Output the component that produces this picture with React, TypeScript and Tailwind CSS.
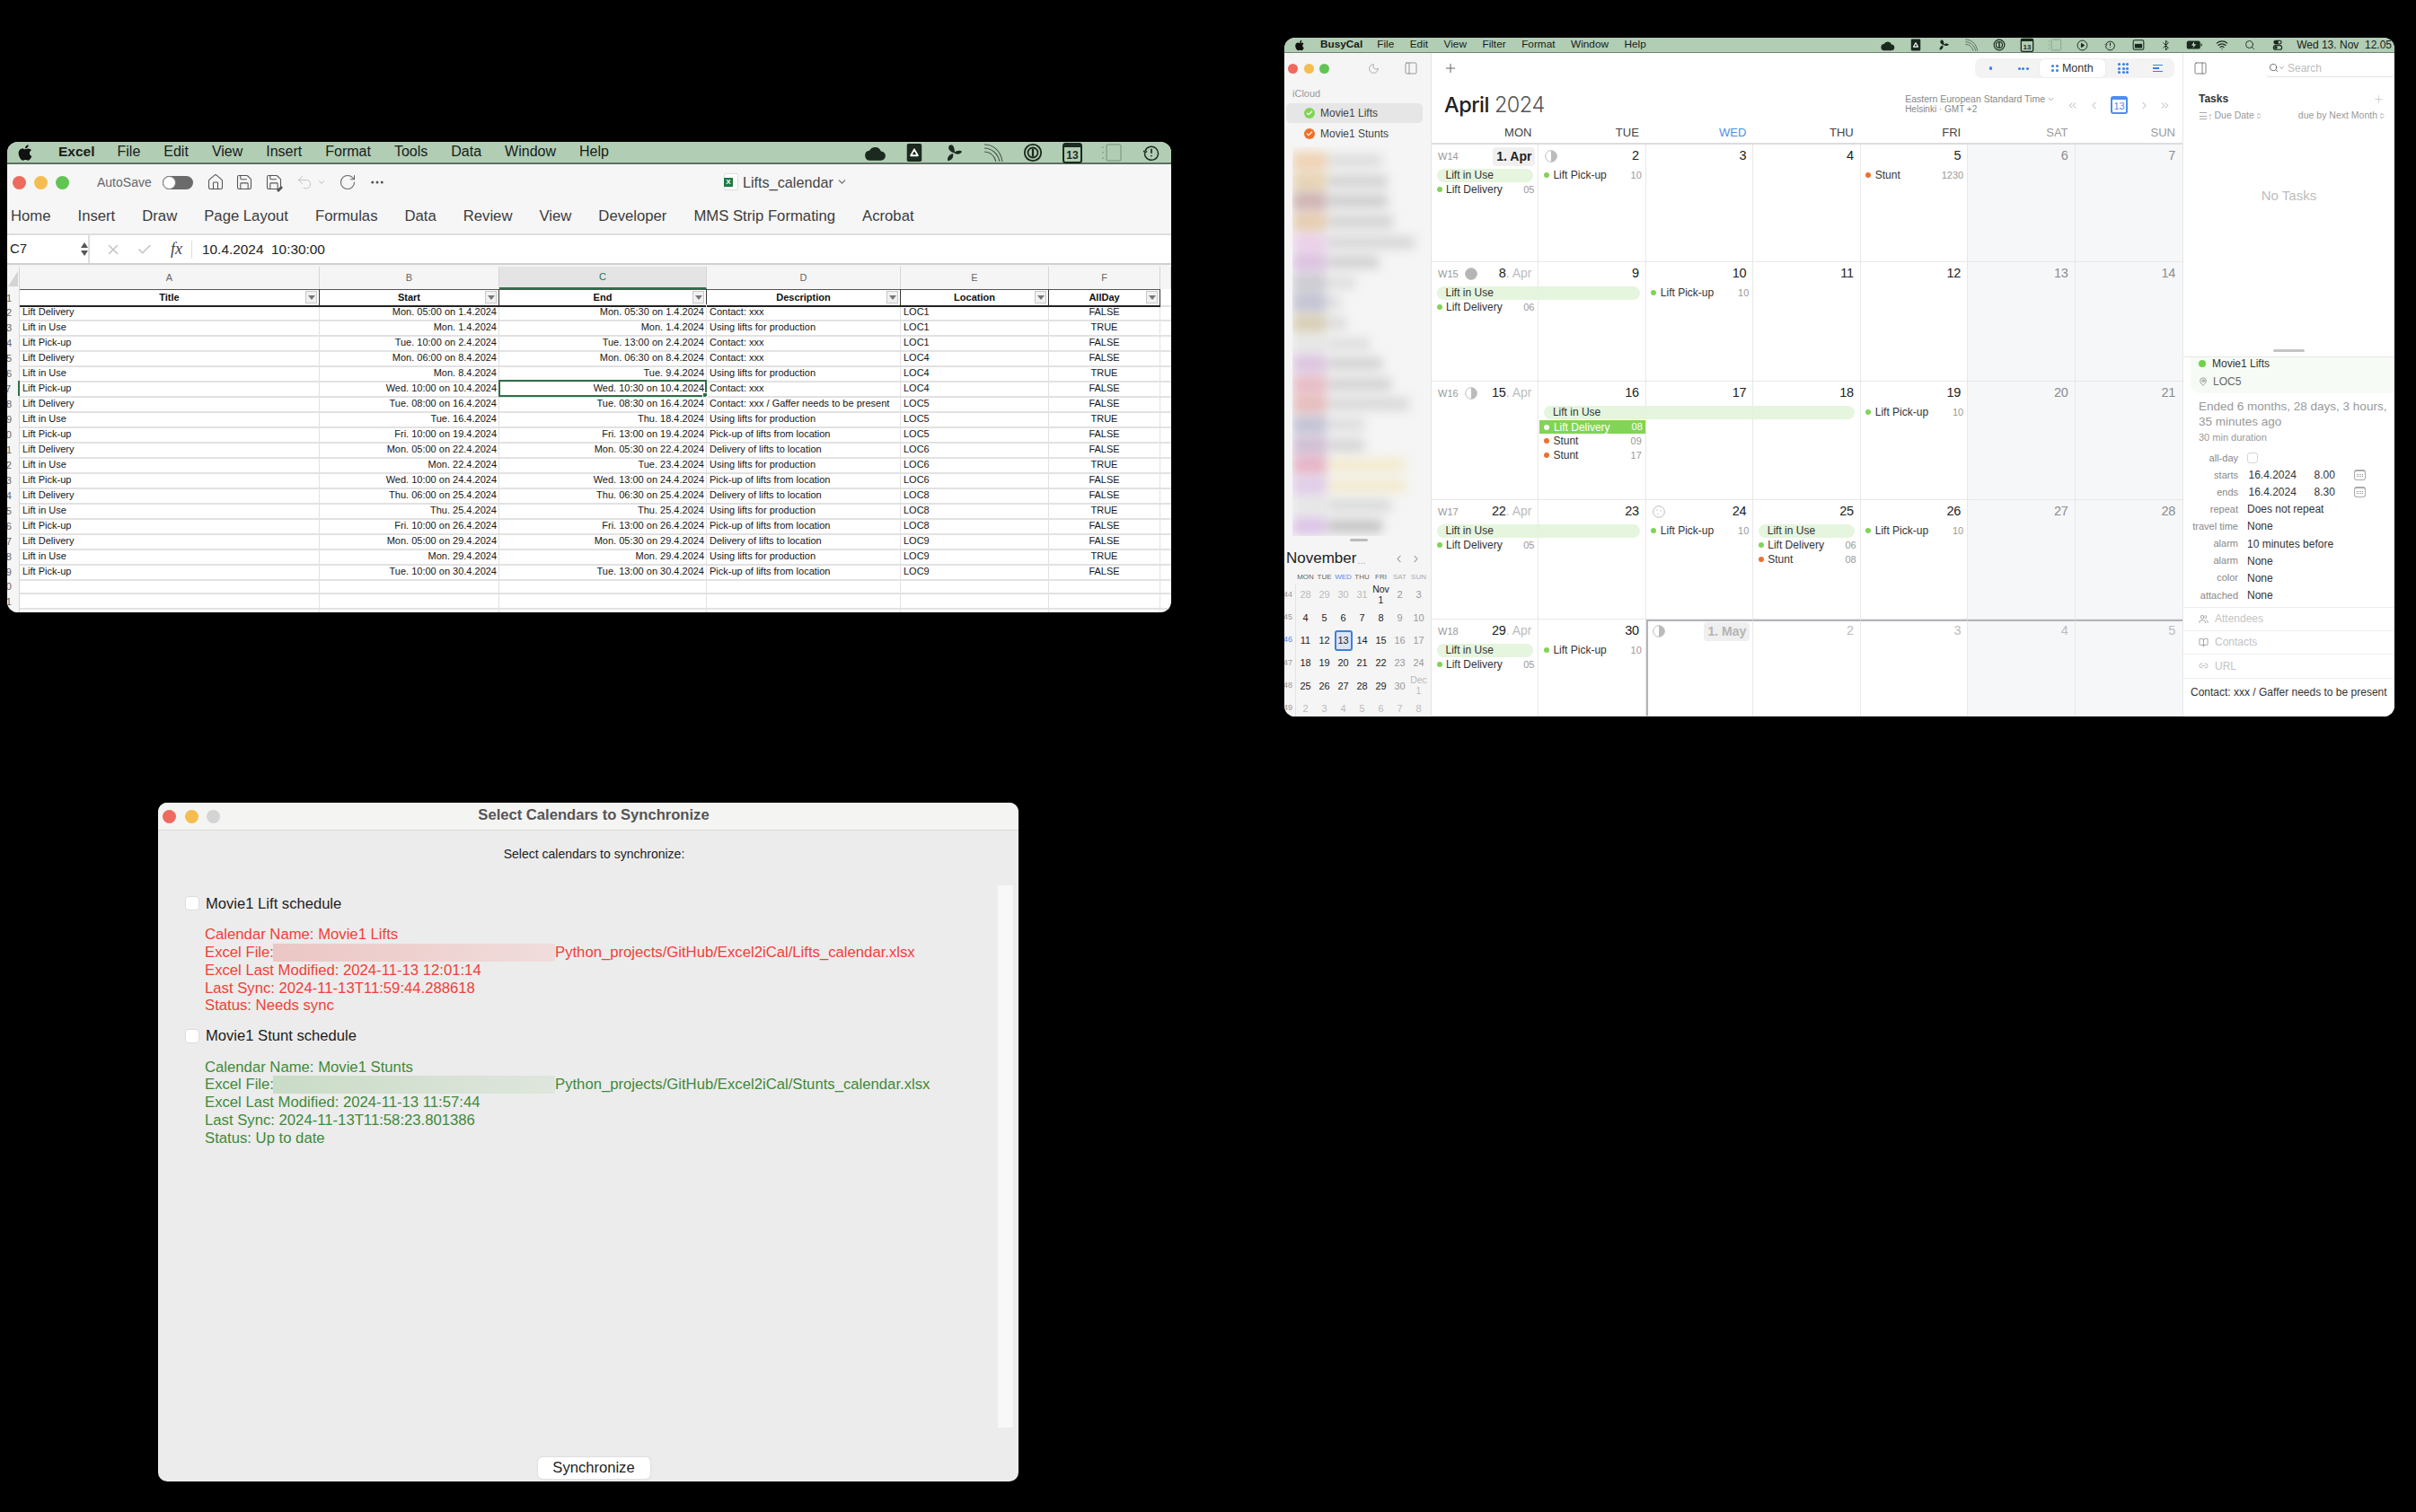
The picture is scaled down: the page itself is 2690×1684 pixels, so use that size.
import React from "react";
import { FaApple } from "react-icons/fa";
import {
  House, Save, Undo2, RotateCw, Ellipsis, ChevronDown, X, Check, Plus, Moon, PanelLeft, PanelRight,
  ChevronLeft, ChevronRight, ChevronsLeft, ChevronsRight, Search, Users, BookOpen, Link2, MapPin,
  Bluetooth, Wifi, ChevronsUpDown,
} from "lucide-react";

const ink = "#1b2a1f";

function Cloud({ s }: { s: number }) {
  return (
    <svg width={s} height={s} viewBox="0 0 24 24" fill={ink}>
      <path d="M6.5 20A5 5 0 0 1 2 15a5 5 0 0 1 4.5-5A6.5 6.5 0 0 1 18.4 10.6 4.8 4.8 0 0 1 23 15.3 4.7 4.7 0 0 1 18.3 20z" />
    </svg>
  );
}
function Drive({ s }: { s: number }) {
  return (
    <svg width={s} height={s} viewBox="0 0 24 24">
      <rect x="3" y="1" width="18" height="22" rx="2" fill={ink} />
      <path d="M12 8l4.2 7.5H7.8z" fill="none" stroke="#fff" strokeWidth="2" strokeLinejoin="round" />
    </svg>
  );
}
function Fan({ s }: { s: number }) {
  return (
    <svg width={s} height={s} viewBox="0 0 24 24" fill={ink}>
      <path d="M11 12C6 10 4 6 7 3c3-2 6 1 6 9z" />
      <path d="M12 12c4-3 8-3 10-1-2 3-7 4-10 1z" />
      <path d="M11 13c1 4-1 8-6 9-2-3 1-8 6-9z" />
    </svg>
  );
}
function Curves({ s }: { s: number }) {
  return (
    <svg width={s} height={s} viewBox="0 0 24 24" fill="none" stroke="#4c5d50" strokeWidth="1.2">
      <path d="M2 3c9 0 18 6 20 19" />
      <path d="M2 7c7 0 15 5 17 15" />
      <path d="M2 11c6 0 11 4 13 11" />
    </svg>
  );
}
function OnePass({ s }: { s: number }) {
  return (
    <svg width={s} height={s} viewBox="0 0 24 24" fill="none" stroke={ink} strokeWidth="2">
      <circle cx="12" cy="12" r="10" />
      <circle cx="12" cy="12" r="6" />
      <path d="M12 7v10" strokeWidth="2.5" />
    </svg>
  );
}
function Cal13({ s }: { s: number }) {
  return (
    <svg width={s} height={s} viewBox="0 0 24 24">
      <rect x="2" y="2" width="20" height="21" rx="2.5" fill="none" stroke={ink} strokeWidth="2" />
      <rect x="2" y="2" width="20" height="4" fill={ink} />
      <text x="12" y="19" fontSize="12" textAnchor="middle" fontWeight="700" fill={ink} fontFamily="Liberation Sans">13</text>
    </svg>
  );
}
function GridBox({ s }: { s: number }) {
  return (
    <svg width={s} height={s} viewBox="0 0 24 24" fill="none" stroke="#8aa48e" strokeWidth="1.5">
      <rect x="6" y="3" width="16" height="18" rx="2" />
      <path d="M2 5v2M2 11v2M2 17v2" />
    </svg>
  );
}
function ClockAlert({ s }: { s: number }) {
  return (
    <svg width={s} height={s} viewBox="0 0 24 24" fill="none" stroke={ink} strokeWidth="1.8">
      <path d="M3.5 10A9 9 0 1 1 3 13" />
      <path d="M1.5 9.5L3.5 12l2.5-2" />
      <path d="M12 7v6M12 15.5v1.5" strokeWidth="2" />
    </svg>
  );
}
function Play({ s }: { s: number }) {
  return (
    <svg width={s} height={s} viewBox="0 0 24 24" fill="none" stroke={ink} strokeWidth="1.8">
      <circle cx="12" cy="12" r="10" />
      <path d="M10 8l6 4-6 4z" fill={ink} />
    </svg>
  );
}
function WinBox({ s }: { s: number }) {
  return (
    <svg width={s} height={s} viewBox="0 0 24 24">
      <rect x="2" y="3" width="20" height="18" rx="2.5" fill="none" stroke={ink} strokeWidth="1.8" />
      <rect x="5" y="10" width="14" height="8" fill={ink} />
    </svg>
  );
}
function Battery({ s }: { s: number }) {
  return (
    <svg width={s} height={s} viewBox="0 0 24 24">
      <rect x="1" y="6" width="20" height="12" rx="2.5" fill={ink} />
      <rect x="22" y="10" width="1.5" height="4" fill={ink} />
      <path d="M12 7l-4 6h3l-1 4 5-6h-3z" fill="#b2cfb6" />
    </svg>
  );
}
function Control({ s }: { s: number }) {
  return (
    <svg width={s} height={s} viewBox="0 0 24 24" fill={ink}>
      <rect x="4" y="3" width="16" height="8" rx="4" />
      <rect x="4" y="13" width="16" height="8" rx="4" fill="none" stroke={ink} strokeWidth="2" />
      <circle cx="15.5" cy="7" r="2.5" fill="#b2cfb6" />
      <circle cx="8.5" cy="17" r="3" />
    </svg>
  );
}

const excelRows: string[][] = [
  ["Lift Delivery", "Mon. 05:00 on 1.4.2024", "Mon. 05:30 on 1.4.2024", "Contact: xxx", "LOC1", "FALSE"],
  ["Lift in Use", "Mon. 1.4.2024", "Mon. 1.4.2024", "Using lifts for production", "LOC1", "TRUE"],
  ["Lift Pick-up", "Tue. 10:00 on 2.4.2024", "Tue. 13:00 on 2.4.2024", "Contact: xxx", "LOC1", "FALSE"],
  ["Lift Delivery", "Mon. 06:00 on 8.4.2024", "Mon. 06:30 on 8.4.2024", "Contact: xxx", "LOC4", "FALSE"],
  ["Lift in Use", "Mon. 8.4.2024", "Tue. 9.4.2024", "Using lifts for production", "LOC4", "TRUE"],
  ["Lift Pick-up", "Wed. 10:00 on 10.4.2024", "Wed. 10:30 on 10.4.2024", "Contact: xxx", "LOC4", "FALSE"],
  ["Lift Delivery", "Tue. 08:00 on 16.4.2024", "Tue. 08:30 on 16.4.2024", "Contact: xxx / Gaffer needs to be present", "LOC5", "FALSE"],
  ["Lift in Use", "Tue. 16.4.2024", "Thu. 18.4.2024", "Using lifts for production", "LOC5", "TRUE"],
  ["Lift Pick-up", "Fri. 10:00 on 19.4.2024", "Fri. 13:00 on 19.4.2024", "Pick-up of lifts from location", "LOC5", "FALSE"],
  ["Lift Delivery", "Mon. 05:00 on 22.4.2024", "Mon. 05:30 on 22.4.2024", "Delivery of lifts to location", "LOC6", "FALSE"],
  ["Lift in Use", "Mon. 22.4.2024", "Tue. 23.4.2024", "Using lifts for production", "LOC6", "TRUE"],
  ["Lift Pick-up", "Wed. 10:00 on 24.4.2024", "Wed. 13:00 on 24.4.2024", "Pick-up of lifts from location", "LOC6", "FALSE"],
  ["Lift Delivery", "Thu. 06:00 on 25.4.2024", "Thu. 06:30 on 25.4.2024", "Delivery of lifts to location", "LOC8", "FALSE"],
  ["Lift in Use", "Thu. 25.4.2024", "Thu. 25.4.2024", "Using lifts for production", "LOC8", "TRUE"],
  ["Lift Pick-up", "Fri. 10:00 on 26.4.2024", "Fri. 13:00 on 26.4.2024", "Pick-up of lifts from location", "LOC8", "FALSE"],
  ["Lift Delivery", "Mon. 05:00 on 29.4.2024", "Mon. 05:30 on 29.4.2024", "Delivery of lifts to location", "LOC9", "FALSE"],
  ["Lift in Use", "Mon. 29.4.2024", "Mon. 29.4.2024", "Using lifts for production", "LOC9", "TRUE"],
  ["Lift Pick-up", "Tue. 10:00 on 30.4.2024", "Tue. 13:00 on 30.4.2024", "Pick-up of lifts from location", "LOC9", "FALSE"],
  ["", "", "", "", "", ""],
  ["", "", "", "", "", ""],
  ["", "", "", "", "", ""],
];

const cols = "grid grid-cols-[14px_334px_200px_231px_216px_165px_124px_12px]";
const cellLine = "border-r border-[#d6d6d6]";
const rowLine = "border-b-2 border-[#e2e2e2]";

function FilterBtn() {
  return (
    <span className="absolute right-[2px] top-[1px] w-[13px] h-[14px] bg-[#f1f1f1] border border-[#c8c8c8] flex items-center justify-center">
      <span className="w-0 h-0 border-l-[4px] border-r-[4px] border-t-[5px] border-l-transparent border-r-transparent border-t-[#777]" />
    </span>
  );
}

function ExcelWindow() {
  const menus = ["File", "Edit", "View", "Insert", "Format", "Tools", "Data", "Window", "Help"];
  const tabs = ["Home", "Insert", "Draw", "Page Layout", "Formulas", "Data", "Review", "View", "Developer", "MMS Strip Formating", "Acrobat"];
  const heads = ["Title", "Start", "End", "Description", "Location", "AllDay"];
  return (
    <div className="absolute left-[8px] top-[158px] w-[1296px] h-[524px] rounded-[12px] overflow-hidden bg-white flex flex-col">
      <div className="h-[25px] bg-[#b1cdb4] border-b-2 border-[#5f7263] flex items-center text-[16px] text-[#17201a] shrink-0">
        <FaApple className="ml-[11px] w-[18px] h-[20px] text-[#111]" />
        <span className="ml-[28px] font-bold text-[15.5px] pb-[1px]">Excel</span>
        <div className="ml-[25px] flex gap-[26px] pb-[1px]">
          {menus.map((m) => <span key={m}>{m}</span>)}
        </div>
        <div className="ml-auto flex items-center">
          {[<Cloud s={26} />, <Drive s={22} />, <Fan s={22} />, <Curves s={24} />, <OnePass s={22} />, <Cal13 s={24} />, <GridBox s={24} />, <ClockAlert s={20} />].map((ic, i) => (
            <span key={i} className="w-[44px] flex justify-center">{ic}</span>
          ))}
        </div>
      </div>
      <div className="h-[40px] bg-[#f6f6f6] flex items-center text-[#555] shrink-0 relative">
        <span className="ml-[6px] w-[15px] h-[15px] rounded-full bg-[#ee6a5f]" />
        <span className="ml-[9px] w-[15px] h-[15px] rounded-full bg-[#f5bd4f]" />
        <span className="ml-[9px] w-[15px] h-[15px] rounded-full bg-[#61c454]" />
        <span className="ml-[31px] text-[14px] text-[#666]">AutoSave</span>
        <span className="ml-[12px] w-[34px] h-[15px] rounded-full bg-[#6b6b6b] flex items-center">
          <span className="w-[15px] h-[15px] rounded-full bg-white border border-[#777]" />
        </span>
        <House size={20} strokeWidth={1.3} className="ml-[15px]" />
        <Save size={20} strokeWidth={1.3} className="ml-[12px]" />
        <span className="ml-[13px] relative">
          <Save size={20} strokeWidth={1.3} />
          <span className="absolute right-[0px] bottom-[1px] w-[7px] h-[3px] bg-[#555] rotate-[-45deg]" />
        </span>
        <Undo2 size={20} strokeWidth={1.2} className="ml-[14px] text-[#c4c4c4]" />
        <ChevronDown size={10} className="ml-[4px] text-[#aaa]" />
        <RotateCw size={20} strokeWidth={1.3} className="ml-[14px] text-[#666]" />
        <Ellipsis size={18} className="ml-[14px] text-[#555]" />
        <div className="absolute left-[798px] flex items-center">
          <span className="w-[16px] h-[19px] bg-white border border-[#ddd] rounded-[2px] flex items-center">
            <span className="w-[10px] h-[10px] bg-[#1f7a45] ml-[-1px] flex items-center justify-center text-[8px] leading-none font-bold text-white">X</span>
          </span>
          <span className="ml-[5px] text-[16.2px] text-[#444]">Lifts_calendar</span>
          <ChevronDown size={13} className="ml-[3px] text-[#666]" />
        </div>
      </div>
      <div className="h-[39px] bg-[#f6f6f6] border-b-2 border-[#dedede] flex items-center pl-[4px] pb-[2px] gap-[30px] text-[16.7px] text-[#3c3c3c] shrink-0">
        {tabs.map((t) => <span key={t}>{t}</span>)}
      </div>
      <div className="h-[33px] bg-white border-b-2 border-[#cfcfcf] flex items-center shrink-0">
        <div className="w-[92px] h-full flex items-center justify-between border-r-2 border-[#dedede] text-[15px] text-[#222] pl-[3px] pr-[0px]">
          <span>C7</span>
          <span className="flex flex-col gap-[3px]">
            <span className="w-0 h-0 border-l-[4px] border-r-[4px] border-b-[6px] border-l-transparent border-r-transparent border-b-[#555]" />
            <span className="w-0 h-0 border-l-[4px] border-r-[4px] border-t-[6px] border-l-transparent border-r-transparent border-t-[#555]" />
          </span>
        </div>
        <X size={18} strokeWidth={2} className="ml-[17px] text-[#c2c2c2]" />
        <Check size={18} strokeWidth={2} className="ml-[17px] text-[#c2c2c2]" />
        <span className="ml-[20px] text-[18px] italic text-[#444] font-['Liberation_Serif',serif]">fx</span>
        <span className="ml-[10px] w-px h-[20px] bg-[#ddd]" />
        <span className="ml-[11px] text-[15.4px] text-[#222] whitespace-pre">10.4.2024  10:30:00</span>
      </div>
      <div className="h-[2px] bg-[#f3f3f3] shrink-0" />
      <div className={`${cols} h-[25px] bg-[#f5f5f5] text-[11px] text-[#666] shrink-0`}>
        <div className="flex items-end justify-start pl-[1px] pb-[3px] border-r border-[#d6d6d6]">
          <span className="w-0 h-0 border-b-[17px] border-l-[11px] border-b-[#d4d4d4] border-l-transparent" />
        </div>
        {["A", "B", "C", "D", "E", "F", ""].map((c, i) => (
          <div key={i} className={`flex items-center justify-center ${cellLine} ${c === "C" ? "bg-[#e4e4e4] text-[#2f6f49] border-b-2 border-b-[#2f6f49]" : ""}`}>{c}</div>
        ))}
      </div>
      <div className={`${cols} h-[17px] text-[11px] text-[#111] shrink-0`}>
        <div className="bg-[#f5f5f5] border-r border-[#d6d6d6] overflow-hidden flex items-center justify-end pr-[8px] text-[#666]">1</div>
        {heads.map((h) => (
          <div key={h} className="relative flex items-center justify-center font-bold border-b-2 border-b-[#222] border-r border-r-[#333] border-t border-t-[#555]">
            {h}
            <FilterBtn />
          </div>
        ))}
        <div className={rowLine} />
      </div>
      {excelRows.map((r, i) => {
        const n = i + 2;
        return (
          <div key={n} className={`${cols} h-[17px] text-[11px] text-[#161616] shrink-0`}>
            <div className={`bg-[#f5f5f5] overflow-hidden flex items-center justify-end pr-[8px] text-[#666] ${n === 7 ? "border-r-2 border-[#2f6f49]" : "border-r border-[#d6d6d6]"}`}>{n}</div>
            <div className={`flex items-center pl-[3px] ${rowLine} ${cellLine}`}>{r[0]}</div>
            <div className={`flex items-center justify-end pr-[2px] ${rowLine} ${cellLine}`}>{r[1]}</div>
            <div className={`relative flex items-center justify-end pr-[2px] ${rowLine} ${cellLine}`}>
              {r[2]}
              {n === 7 && (
                <span className="absolute -left-[1px] -top-[1px] -right-[1px] -bottom-[1px] border-2 border-[#2f6f49]">
                  <span className="absolute -right-[3px] -bottom-[3px] w-[6px] h-[6px] bg-[#2f6f49] border border-white" />
                </span>
              )}
            </div>
            <div className={`flex items-center pl-[3px] ${rowLine} ${cellLine} whitespace-nowrap`}>{r[3]}</div>
            <div className={`flex items-center pl-[3px] ${rowLine} ${cellLine}`}>{r[4]}</div>
            <div className={`flex items-center justify-center ${rowLine} ${cellLine}`}>{r[5]}</div>
            <div className={rowLine} />
          </div>
        );
      })}
    </div>
  );
}

function SyncEntry({ title, color, blur, name, modified, sync, status, file }: { title: string; color: string; blur: string; name: string; modified: string; sync: string; status: string; file: string }) {
  return (
    <div>
      <div className="flex items-center h-[20px] pl-[30px]">
        <span className="w-[16px] h-[16px] rounded-[4px] bg-white border border-[#dcdcdc]" />
        <span className="ml-[7px] text-[16.6px] text-[#1c1c1c] pt-[2px]">{title}</span>
      </div>
      <div className={`mt-[15px] pl-[52px] text-[16.7px] leading-[19.75px] whitespace-nowrap ${color}`}>
        <div>{name}</div>
        <div className="flex items-center">
          <span className="w-[76px]">Excel File:</span>
          <span className={`w-[314px] h-[20px] ${blur}`} />
          <span>{file}</span>
        </div>
        <div>{modified}</div>
        <div>{sync}</div>
        <div>{status}</div>
      </div>
    </div>
  );
}

function SyncWindow() {
  return (
    <div className="absolute left-[176px] top-[894px] w-[958px] h-[756px] rounded-[10px] overflow-hidden bg-[#ececec] flex flex-col">
      <div className="h-[31px] shrink-0 bg-[#f4f4f3] border-b border-[#dadada] flex items-center relative">
        <span className="ml-[5px] w-[15px] h-[15px] rounded-full bg-[#ee6a5f]" />
        <span className="ml-[9.5px] w-[15px] h-[15px] rounded-full bg-[#f5bd4f]" />
        <span className="ml-[9.5px] w-[15px] h-[15px] rounded-full bg-[#d4d4d4]" />
        <span className="absolute inset-x-0 pl-[12px] text-center text-[16.6px] font-bold text-[#555] -mt-[1px]">Select Calendars to Synchronize</span>
      </div>
      <div className="flex-1 flex min-h-0">
        <div className="flex-1 min-w-0">
          <div className="mt-[16px] h-[20px] pl-[36px] text-center text-[14px] leading-[20px] text-[#222]">Select calendars to synchronize:</div>
          <div className="mt-[35px]">
            <SyncEntry
              title="Movie1 Lift schedule"
              color="text-[#f23f38]"
              blur="bg-linear-to-r from-[#ebc6c4] to-[#f0dddc]"
              name="Calendar Name: Movie1 Lifts"
              file="Python_projects/GitHub/Excel2iCal/Lifts_calendar.xlsx"
              modified="Excel Last Modified: 2024-11-13 12:01:14"
              sync="Last Sync: 2024-11-13T11:59:44.288618"
              status="Status: Needs sync"
            />
          </div>
          <div className="mt-[13.5px]">
            <SyncEntry
              title="Movie1 Stunt schedule"
              color="text-[#3f8a3a]"
              blur="bg-linear-to-r from-[#c9dcc6] to-[#dfe6dd]"
              name="Calendar Name: Movie1 Stunts"
              file="Python_projects/GitHub/Excel2iCal/Stunts_calendar.xlsx"
              modified="Excel Last Modified: 2024-11-13 11:57:44"
              sync="Last Sync: 2024-11-13T11:58:23.801386"
              status="Status: Up to date"
            />
          </div>
        </div>
        <div className="w-[17px] mt-[61px] mb-[32px] mr-[6px] bg-[#f8f8f8]" />
      </div>
      <div className="h-[28px] shrink-0 pl-[12px] flex justify-center">
        <button className="w-[125px] h-[24px] mt-[0.5px] rounded-[5px] bg-white text-[16.6px] text-[#222] shadow-[0_0_2px_rgba(0,0,0,0.2)]">Synchronize</button>
      </div>
    </div>
  );
}

const blurRows: [string, string, string][] = [
  ["bg-[#efd2b4]", "w-[60px]", "bg-[#dcdcdc]"],
  ["bg-[#e6d3b4]", "w-[66px]", "bg-[#d2d2d2]"],
  ["bg-[#cfb4b4]", "w-[66px]", "bg-[#cccccc]"],
  ["bg-[#e6ccb0]", "w-[72px]", "bg-[#d2d2d2]"],
  ["bg-[#ead0e8]", "w-[96px]", "bg-[#d6d6d6]"],
  ["bg-[#dcc2e0]", "w-[56px]", "bg-[#d0d0d0]"],
  ["bg-[#cbcbd1]", "w-[30px]", "bg-[#dedede]"],
  ["bg-[#c2c2d4]", "w-[14px]", "bg-[#dcdcdc]"],
  ["bg-[#d8ceb6]", "w-[20px]", "bg-[#dadada]"],
  ["bg-[#e6e6e6]", "w-[46px]", "bg-[#dedede]"],
  ["bg-[#dcc4e0]", "w-[60px]", "bg-[#d2d2d2]"],
  ["bg-[#e6bcc6]", "w-[70px]", "bg-[#d2d2d2]"],
  ["bg-[#e6bcbc]", "w-[90px]", "bg-[#d8d8d8]"],
  ["bg-[#c2c2d4]", "w-[40px]", "bg-[#dcdcdc]"],
  ["bg-[#d0bed4]", "w-[40px]", "bg-[#d4d4d4]"],
  ["bg-[#e6b4c6]", "w-[86px]", "bg-[#f2eacc]"],
  ["bg-[#dfcce8]", "w-[86px]", "bg-[#f2eacc]"],
  ["bg-[#e6e6e6]", "w-[70px]", "bg-[#dadada]"],
  ["bg-[#dcc4e8]", "w-[60px]", "bg-[#c2c2c2]"],
];

const miniRows: [string, string[], string[]][] = [
  ["44", ["28", "29", "30", "31", "Nov 1", "2", "3"], ["d", "d", "d", "d", "n", "w", "w"]],
  ["45", ["4", "5", "6", "7", "8", "9", "10"], ["n", "n", "n", "n", "n", "w", "w"]],
  ["46", ["11", "12", "13", "14", "15", "16", "17"], ["n", "n", "s", "n", "n", "w", "w"]],
  ["47", ["18", "19", "20", "21", "22", "23", "24"], ["n", "n", "n", "n", "n", "w", "w"]],
  ["48", ["25", "26", "27", "28", "29", "30", "Dec 1"], ["n", "n", "n", "n", "n", "w", "d"]],
  ["49", ["2", "3", "4", "5", "6", "7", "8"], ["d", "d", "d", "d", "d", "d", "d"]],
];

function CheckDot({ color }: { color: string }) {
  return (
    <span className={`w-[12px] h-[12px] rounded-full flex items-center justify-center ${color}`}>
      <Check size={8} strokeWidth={3.5} className="text-white" />
    </span>
  );
}

function Sidebar() {
  return (
    <div className="w-[164px] shrink-0 bg-[#f5f5f5] flex flex-col border-r border-[#e4e4e4]">
      <div className="h-[34px] flex items-center pl-[4px] shrink-0">
        <span className="ml-[0px] w-[11px] h-[11px] rounded-full bg-[#ee6a5f]" />
        <span className="ml-[6.5px] w-[11px] h-[11px] rounded-full bg-[#f5bd4f]" />
        <span className="ml-[6.5px] w-[11px] h-[11px] rounded-full bg-[#61c454]" />
        <Moon size={13} strokeWidth={1.2} className="ml-[43px] text-[#888]" />
        <PanelLeft size={16} strokeWidth={1.1} className="ml-[27px] text-[#777]" />
      </div>
      <div className="h-[22px] pl-[9px] text-[11px] text-[#9a9a9a] flex items-center shrink-0">iCloud</div>
      <div className="ml-[2px] w-[152px] h-[22px] rounded-[5px] bg-[#e6e6e6] flex items-center pl-[20px] text-[12px] text-[#444] shrink-0">
        <CheckDot color="bg-[#82d457]" />
        <span className="ml-[6px]">Movie1 Lifts</span>
      </div>
      <div className="ml-[2px] mt-[1px] w-[152px] h-[22px] flex items-center pl-[20px] text-[12px] text-[#444] shrink-0">
        <CheckDot color="bg-[#f0702a]" />
        <span className="ml-[6px]">Movie1 Stunts</span>
      </div>
      <div className="mt-[3px] ml-[9px] h-[434px] w-[150px] overflow-hidden shrink-0">
        <div className="blur-[6px] pt-[5px] flex flex-col">
          {blurRows.map((r, i) => (
            <div key={i} className="h-[22.6px] flex items-center">
              <span className={`w-[38px] h-[20px] ${r[0]}`} />
              <span className={`ml-[2px] h-[14px] ${r[1]} ${r[2]}`} />
            </div>
          ))}
        </div>
      </div>
      <div className="mt-[3px] h-[3px] w-[20px] ml-[73px] rounded-full bg-[#bbbbbb] shrink-0" />
      <div className="mt-[9px] h-[20px] pl-[2px] pr-[10px] flex items-center shrink-0">
        <span className="text-[17px] text-[#222]">November</span>
        <span className="text-[11px] text-[#aaa] ml-[1px] mt-[4px]">...</span>
        <ChevronLeft size={13} className="ml-auto text-[#aaa]" />
        <ChevronRight size={13} className="ml-[6px] text-[#aaa]" />
      </div>
      <div className="mt-[3px] h-[15px] grid grid-cols-[13px_repeat(7,21px)] text-[8px] text-[#666] items-center shrink-0">
        <span />
        {["MON", "TUE", "WED", "THU", "FRI", "SAT", "SUN"].map((d) => (
          <span key={d} className={`text-center ${d === "WED" ? "text-[#4d8df0]" : d === "SAT" || d === "SUN" ? "text-[#aaa]" : ""}`}>{d}</span>
        ))}
      </div>
      <div className="flex flex-col overflow-hidden flex-1 min-h-0">
        {miniRows.map((r) => (
          <div key={r[0]} className="grid grid-cols-[13px_repeat(7,21px)] h-[25.3px] shrink-0 text-[11px] items-center">
            <span className={`h-full flex items-center justify-end pr-[3px] text-[9px] border-r border-[#e4e4e4] ${r[0] === "46" ? "text-[#4d8df0]" : "text-[#999]"}`}>{r[0]}</span>
            {r[1].map((d, i) => {
              const k = r[2][i];
              const color = k === "d" ? "text-[#bbbbbb]" : k === "w" ? "text-[#999]" : "text-[#222]";
              if (k === "s") {
                return (
                  <span key={i} className="flex justify-center">
                    <span className="w-[20px] h-[23px] rounded-[3px] border-2 border-[#3f7fdc] bg-[#d9e5f9] flex items-center justify-center text-[#222]">{d}</span>
                  </span>
                );
              }
              if (d.includes(" ")) {
                const [a, b] = d.split(" ");
                return (
                  <span key={i} className={`text-center leading-[11px] text-[10.5px] ${color}`}>
                    <span className="block">{a}</span>
                    <span className="block mt-[1px]">{b}</span>
                  </span>
                );
              }
              return <span key={i} className={`text-center ${color}`}>{d}</span>;
            })}
          </div>
        ))}
      </div>
    </div>
  );
}

function MoonIcon({ kind }: { kind: "full" | "half" | "halfL" | "new" }) {
  return (
    <svg width="14" height="14" viewBox="0 0 14 14">
      <circle cx="7" cy="7" r="6.3" fill={kind === "full" ? "#b5b5b5" : "#fff"} stroke={kind === "full" ? "#b5b5b5" : "#bbb"} strokeWidth="1" />
      {kind === "half" && <path d="M7 .7a6.3 6.3 0 0 1 0 12.6z" fill="#bbb" />}
      {kind === "halfL" && <path d="M7 .7a6.3 6.3 0 0 0 0 12.6z" fill="#bbb" />}
      {kind === "new" && <g fill="#ddd"><circle cx="5" cy="5" r="1" /><circle cx="9" cy="6" r="1" /><circle cx="6" cy="9.5" r="1" /></g>}
    </svg>
  );
}

type Ev = { cls: string; kind: "pill" | "dot" | "sel"; title: string; time?: string; color?: string };
type Day = { n: string; suffix?: string; tone?: "dim" };
type WeekData = { label: string; moon?: "full" | "half" | "halfL" | "new"; moons?: [number, "full" | "half" | "halfL" | "new"]; days: Day[]; events: Ev[]; cls: string };

const colStart = ["col-start-1", "col-start-2", "col-start-3", "col-start-4", "col-start-5", "col-start-6", "col-start-7"];

const G = "bg-[#82d457]";
const O = "bg-[#f0702a]";

const weeks: WeekData[] = [
  {
    label: "W14", cls: "h-[131px]", moons: [1, "half"],
    days: [{ n: "1. Apr" }, { n: "2" }, { n: "3" }, { n: "4" }, { n: "5" }, { n: "6" }, { n: "7" }],
    events: [
      { cls: "col-start-1 col-span-1 row-start-2", kind: "pill", title: "Lift in Use" },
      { cls: "col-start-1 col-span-1 row-start-3", kind: "dot", title: "Lift Delivery", time: "05", color: G },
      { cls: "col-start-2 col-span-1 row-start-2", kind: "dot", title: "Lift Pick-up", time: "10", color: G },
      { cls: "col-start-5 col-span-1 row-start-2", kind: "dot", title: "Stunt", time: "1230", color: O },
    ],
  },
  {
    label: "W15", cls: "h-[133px]", moon: "full",
    days: [{ n: "8", suffix: ". Apr" }, { n: "9" }, { n: "10" }, { n: "11" }, { n: "12" }, { n: "13" }, { n: "14" }],
    events: [
      { cls: "col-start-1 col-span-2 row-start-2", kind: "pill", title: "Lift in Use" },
      { cls: "col-start-1 col-span-1 row-start-3", kind: "dot", title: "Lift Delivery", time: "06", color: G },
      { cls: "col-start-3 col-span-1 row-start-2", kind: "dot", title: "Lift Pick-up", time: "10", color: G },
    ],
  },
  {
    label: "W16", cls: "h-[132px]", moon: "half",
    days: [{ n: "15", suffix: ". Apr" }, { n: "16" }, { n: "17" }, { n: "18" }, { n: "19" }, { n: "20" }, { n: "21" }],
    events: [
      { cls: "col-start-2 col-span-3 row-start-2", kind: "pill", title: "Lift in Use" },
      { cls: "col-start-2 col-span-1 row-start-3", kind: "sel", title: "Lift Delivery", time: "08" },
      { cls: "col-start-2 col-span-1 row-start-4", kind: "dot", title: "Stunt", time: "09", color: O },
      { cls: "col-start-2 col-span-1 row-start-5", kind: "dot", title: "Stunt", time: "17", color: O },
      { cls: "col-start-5 col-span-1 row-start-2", kind: "dot", title: "Lift Pick-up", time: "10", color: G },
    ],
  },
  {
    label: "W17", cls: "h-[133px]", moons: [2, "new"],
    days: [{ n: "22", suffix: ". Apr" }, { n: "23" }, { n: "24" }, { n: "25" }, { n: "26" }, { n: "27" }, { n: "28" }],
    events: [
      { cls: "col-start-1 col-span-2 row-start-2", kind: "pill", title: "Lift in Use" },
      { cls: "col-start-1 col-span-1 row-start-3", kind: "dot", title: "Lift Delivery", time: "05", color: G },
      { cls: "col-start-3 col-span-1 row-start-2", kind: "dot", title: "Lift Pick-up", time: "10", color: G },
      { cls: "col-start-4 col-span-1 row-start-2", kind: "pill", title: "Lift in Use" },
      { cls: "col-start-4 col-span-1 row-start-3", kind: "dot", title: "Lift Delivery", time: "06", color: G },
      { cls: "col-start-4 col-span-1 row-start-4", kind: "dot", title: "Stunt", time: "08", color: O },
      { cls: "col-start-5 col-span-1 row-start-2", kind: "dot", title: "Lift Pick-up", time: "10", color: G },
    ],
  },
  {
    label: "W18", cls: "h-[108px]", moons: [2, "half"],
    days: [{ n: "29", suffix: ". Apr" }, { n: "30" }, { n: "1. May", tone: "dim" }, { n: "2", tone: "dim" }, { n: "3", tone: "dim" }, { n: "4", tone: "dim" }, { n: "5", tone: "dim" }],
    events: [
      { cls: "col-start-1 col-span-1 row-start-2", kind: "pill", title: "Lift in Use" },
      { cls: "col-start-1 col-span-1 row-start-3", kind: "dot", title: "Lift Delivery", time: "05", color: G },
      { cls: "col-start-2 col-span-1 row-start-2", kind: "dot", title: "Lift Pick-up", time: "10", color: G },
    ],
  },
];

function EventView({ e }: { e: Ev }) {
  if (e.kind === "pill") {
    return (
      <div className={`${e.cls} z-10 ml-[5.5px] mr-[6.5px] h-[14.5px] rounded-full bg-[#e2f4da]/90 pl-[10px] text-[12px] leading-[14px] text-[#333]`}>{e.title}</div>
    );
  }
  if (e.kind === "sel") {
    return (
      <div className={`${e.cls} z-10 mx-[1px] h-[15px] bg-[#82d457] flex items-center pl-[5px] pr-[3px] text-[12px] text-white`}>
        <span className="w-[6px] h-[6px] rounded-full bg-white" />
        <span className="ml-[4.5px]">{e.title}</span>
        <span className="ml-auto text-[11px]">{e.time}</span>
      </div>
    );
  }
  return (
    <div className={`${e.cls} z-10 h-[14.5px] flex items-center pl-[5.5px] pr-[5px] text-[12px] text-[#333]`}>
      <span className={`w-[6px] h-[6px] rounded-full ${e.color}`} />
      <span className="ml-[4.5px]">{e.title}</span>
      <span className="ml-auto text-[11px] text-[#999]">{e.time}</span>
    </div>
  );
}

function WeekRow({ w, last }: { w: WeekData; last?: boolean }) {
  return (
    <div className={`grid grid-cols-7 grid-rows-[27px_16px_16px_16px_16px_1fr] ${w.cls}`}>
      {w.days.map((d, i) => {
        const weekend = i >= 5;
        const isMayStart = last && i === 2;
        const borders = last && i >= 2 ? "border-t-2 border-t-[#b4b4ba]" : "";
        return (
          <div
            key={i}
            className={`${colStart[i]} row-start-1 row-span-6 border-b ${i < 6 ? "border-r" : ""} border-[#e8e8e8] ${weekend ? "bg-[#f6f7f9]" : "bg-white"} ${borders} ${isMayStart ? "border-l-2 border-l-[#b4b4ba]" : ""}`}
          />
        );
      })}
      {w.days.map((d, i) => {
        const showWeek = i === 0;
        const weekend = i >= 5;
        const pillDay = d.n === "1. Apr" || d.n === "1. May";
        const numColor = d.tone === "dim" ? "text-[#bdbdbd]" : weekend ? "text-[#8c8c8c]" : "text-[#222]";
        const m = w.moons && w.moons[0] === i ? w.moons[1] : null;
        return (
          <div key={`h${i}`} className={`${colStart[i]} row-start-1 z-10 flex items-center pr-[8px] pb-[1px] pl-[7px]`}>
            {showWeek && <span className="text-[11px] text-[#999]">{w.label}</span>}
            {showWeek && w.moon && <span className="ml-[7px] flex"><MoonIcon kind={w.moon} /></span>}
            {m && <span className="flex"><MoonIcon kind={m} /></span>}
            <span className="ml-auto flex items-baseline">
              {pillDay ? (
                <span className={`-mr-[4px] px-[4px] h-[21px] leading-[21px] rounded-[4px] text-[14px] font-bold ${d.tone === "dim" ? "bg-[#efefef] text-[#b4b4b4]" : "bg-[#f0f0f0] text-[#222]"}`}>{d.n}</span>
              ) : (
                <>
                  <span className={`text-[14.5px] tracking-[-0.3px] ${numColor}`}>{d.n}</span>
                  {d.suffix && <span className="text-[14px] text-[#bdbdbd]">{d.suffix}</span>}
                </>
              )}
            </span>
          </div>
        );
      })}
      {w.events.map((e, i) => <EventView key={i} e={e} />)}
    </div>
  );
}

function MainCal() {
  return (
    <div className="w-[836px] shrink-0 flex flex-col bg-white">
      <div className="h-[34px] flex items-center justify-between shrink-0 pr-[9px] pl-[13px]">
        <Plus size={16} strokeWidth={1.5} className="text-[#666]" />
        <div className="w-[222px] h-[22px] rounded-[7px] bg-[#f3f3f4] flex items-center text-[#3f7fdc]">
          <span className="w-[35px] flex justify-center"><span className="w-[3.5px] h-[3.5px] rounded-full bg-[#3f7fdc]" /></span>
          <span className="w-[37px] flex justify-center gap-[1.5px]">
            <span className="w-[3px] h-[3px] rounded-full bg-[#3f7fdc]" />
            <span className="w-[3px] h-[3px] rounded-full bg-[#3f7fdc]" />
            <span className="w-[3px] h-[3px] rounded-full bg-[#3f7fdc]" />
          </span>
          <span className="w-[73px] h-[20px] rounded-[5px] bg-white shadow-[0_0_2px_rgba(0,0,0,0.1)] flex items-center justify-center gap-[4px] text-[12.5px] text-[#333]">
            <span className="grid grid-cols-2 gap-[1.5px]">
              <span className="w-[3px] h-[3px] rounded-full bg-[#3f7fdc]" />
              <span className="w-[3px] h-[3px] rounded-full bg-[#3f7fdc]" />
              <span className="w-[3px] h-[3px] rounded-full bg-[#3f7fdc]" />
              <span className="w-[3px] h-[3px] rounded-full bg-[#3f7fdc]" />
            </span>
            Month
          </span>
          <span className="w-[40px] flex justify-center">
            <span className="grid grid-cols-3 gap-[1.5px]">
              {[0, 1, 2, 3, 4, 5, 6, 7, 8].map((i) => <span key={i} className="w-[3px] h-[3px] rounded-full bg-[#3f7fdc]" />)}
            </span>
          </span>
          <span className="w-[37px] flex flex-col items-center gap-[2px]">
            <span className="w-[11px] h-[1.5px] bg-[#3f7fdc]" />
            <span className="w-[7px] h-[1.5px] bg-[#3f7fdc] mr-[4px]" />
            <span className="w-[11px] h-[1.5px] bg-[#3f7fdc]" />
          </span>
        </div>
      </div>
      <div className="h-[43px] shrink-0 flex items-start pl-[14px] pr-[13px] pt-[8px]">
        <div className="h-[32px] flex items-center text-[23.5px] tracking-[-0.5px] font-['Inter',sans-serif]">
          <span className="font-medium text-[#222]">April</span>
          <span className="ml-[6px] font-light text-[#555]">2024</span>
        </div>
        <div className="ml-auto flex items-center h-[26px] mt-[3px]">
          <div className="text-[#888] text-[10.5px] leading-[12px] -mt-[2px]">
            <div className="flex items-center">Eastern European Standard Time<ChevronDown size={9} className="ml-[2px]" /></div>
            <div className="text-[10px]">Helsinki · GMT +2</div>
          </div>
          <ChevronsLeft size={13} strokeWidth={1.2} className="ml-[13px] text-[#888]" />
          <ChevronLeft size={13} strokeWidth={1.2} className="ml-[11px] text-[#888]" />
          <span className="ml-[12px] w-[19px] h-[20px] rounded-[3px] border-2 border-[#4d8df0] border-t-[4px] bg-white flex items-center justify-center text-[11px] text-[#4d8df0]">13</span>
          <ChevronRight size={13} strokeWidth={1.2} className="ml-[12px] text-[#888]" />
          <ChevronsRight size={13} strokeWidth={1.2} className="ml-[10px] text-[#888]" />
        </div>
      </div>
      <div className="h-[25px] shrink-0 grid grid-cols-7 border-b-2 border-[#dcdcdc] text-[13px] text-[#444] items-center">
        {["MON", "TUE", "WED", "THU", "FRI", "SAT", "SUN"].map((d) => (
          <span key={d} className={`text-right pr-[8px] ${d === "WED" ? "text-[#4d8df0]" : d === "SAT" || d === "SUN" ? "text-[#9a9a9a]" : ""}`}>{d}</span>
        ))}
      </div>
      {weeks.map((w, i) => <WeekRow key={w.label} w={w} last={i === 4} />)}
    </div>
  );
}

const fields: [string, string][] = [
  ["repeat", "Does not repeat"],
  ["travel time", "None"],
  ["alarm", "10 minutes before"],
  ["alarm", "None"],
  ["color", "None"],
  ["attached", "None"],
];

function FieldRow({ label, children }: { label: string; children: React.ReactNode }) {
  return (
    <div className="h-[19.1px] flex items-center">
      <span className="w-[61px] text-right text-[11px] text-[#888] whitespace-nowrap">{label}</span>
      <div className="ml-[10px] flex-1 flex items-center text-[12px] text-[#333]">{children}</div>
    </div>
  );
}

function RightPanel() {
  return (
    <div className="flex-1 min-w-0 flex flex-col bg-white border-l border-[#e8e8e8]">
      <div className="h-[339px] shrink-0 border-b border-[#e6e6e6] flex flex-col">
        <div className="h-[34px] flex items-center pl-[11px] shrink-0">
          <PanelRight size={16} strokeWidth={1.1} className="text-[#555]" />
          <div className="ml-[65px] flex-1 h-[20px] border-b border-[#e3e3e3] rounded-[4px] flex items-center pl-[3px] text-[12px] text-[#bdbdbd]">
            <Search size={11} strokeWidth={1.6} className="text-[#444]" />
            <ChevronDown size={7} className="text-[#444]" />
            <span className="ml-[3px]">Search</span>
          </div>
        </div>
        <div className="mt-[8px] h-[18px] pl-[17px] pr-[11px] flex items-center justify-between shrink-0">
          <span className="text-[12px] font-bold text-[#333]">Tasks</span>
          <Plus size={13} strokeWidth={1.2} className="text-[#bbb]" />
        </div>
        <div className="mt-[1px] h-[18px] pl-[17px] pr-[10px] flex items-center text-[10.5px] text-[#999] shrink-0">
          <span className="text-[11px] text-[#aaa]">☰↑</span>
          <span className="ml-[2px]">Due Date</span>
          <ChevronsUpDown size={8} className="ml-[1px] text-[#777]" />
          <span className="ml-auto">due by Next Month</span>
          <ChevronsUpDown size={8} className="ml-[1px] text-[#777]" />
        </div>
        <div className="h-[160px] flex items-center justify-center text-[15px] text-[#bdbdbd] shrink-0">No Tasks</div>
        <div className="mt-[91px] mx-auto w-[35px] h-[3px] rounded-full bg-[#c4c4c4] shrink-0" />
      </div>
      <div className="ml-[8px] bg-[#f7fbf5] rounded-bl-[10px] pb-[7px] shrink-0 text-[12px]">
        <div className="h-[13px] pl-[9px] flex items-center text-[#333]">
          <span className="w-[8px] h-[8px] rounded-full bg-[#6fd24b]" />
          <span className="ml-[7px]">Movie1 Lifts</span>
        </div>
        <div className="mt-[7px] h-[13px] pl-[9px] flex items-center text-[#666]">
          <MapPin size={10} strokeWidth={1.5} className="text-[#666]" />
          <span className="ml-[6px]">LOC5</span>
        </div>
      </div>
      <div className="pl-[17px] mt-[5.5px] text-[13.5px] leading-[17px] text-[#999] shrink-0">Ended 6 months, 28 days, 3 hours,<br />35 minutes ago</div>
      <div className="pl-[17px] mt-[2px] h-[15px] text-[11px] leading-[15px] text-[#999] shrink-0">30 min duration</div>
      <div className="mt-[6px] shrink-0">
        <FieldRow label="all-day"><span className="w-[12px] h-[12px] rounded-[3px] bg-white border border-[#d5d5d5]" /></FieldRow>
        <FieldRow label="starts">
          <span className="ml-[1.5px] w-[73px]">16.4.2024</span><span className="w-[44px]">8.00</span>
          <CalMini />
        </FieldRow>
        <FieldRow label="ends">
          <span className="ml-[1.5px] w-[73px]">16.4.2024</span><span className="w-[44px]">8.30</span>
          <CalMini />
        </FieldRow>
        {fields.map((f, i) => <FieldRow key={i} label={f[0]}>{f[1]}</FieldRow>)}
      </div>
      <div className="mt-[3.5px] h-[26px] border-t border-[#ededed] pl-[17px] flex items-center text-[12px] text-[#c4c4c4] shrink-0">
        <Users size={11} strokeWidth={1.4} className="text-[#777]" /><span className="ml-[7px]">Attendees</span>
      </div>
      <div className="h-[26px] border-t border-[#ededed] pl-[17px] flex items-center text-[12px] text-[#c4c4c4] shrink-0">
        <BookOpen size={11} strokeWidth={1.4} className="text-[#777]" /><span className="ml-[7px]">Contacts</span>
      </div>
      <div className="h-[27px] border-t border-[#ededed] pl-[17px] flex items-center text-[12px] text-[#c4c4c4] shrink-0">
        <Link2 size={11} strokeWidth={1.4} className="text-[#999]" /><span className="ml-[7px]">URL</span>
      </div>
      <div className="h-[32px] border-t border-[#ededed] pl-[8px] flex items-center text-[12px] text-[#333] shrink-0">Contact: xxx / Gaffer needs to be present</div>
    </div>
  );
}

function CalMini() {
  return (
    <span className="w-[13px] h-[12px] rounded-[3px] border border-[#aaa] border-t-2 flex items-center justify-center">
      <span className="w-[7px] h-[3px] border-y border-dotted border-[#888]" />
    </span>
  );
}

function BusyCal() {
  const menus = ["File", "Edit", "View", "Filter", "Format", "Window", "Help"];
  return (
    <div className="absolute left-[1430px] top-[42px] w-[1236px] h-[756px] rounded-[12px] overflow-hidden bg-white flex flex-col">
      <div className="h-[17px] shrink-0 bg-[#b1cdb4] border-b border-[#6f8273] flex items-center text-[11.8px] text-[#17201a]">
        <FaApple className="ml-[11px] w-[12px] h-[13px] text-[#111]" />
        <span className="ml-[17px] font-bold">BusyCal</span>
        <div className="ml-[16px] flex gap-[17.5px]">
          {menus.map((m) => <span key={m}>{m}</span>)}
        </div>
        <div className="ml-auto flex items-center">
          {[<Cloud s={17} />, <Drive s={14} />, <Fan s={14} />, <Curves s={16} />, <OnePass s={14} />, <Cal13 s={16} />, <GridBox s={16} />, <Play s={13} />, <ClockAlert s={13} />, <WinBox s={14} />, <Bluetooth size={13} strokeWidth={1.8} color={ink} />, <Battery s={18} />, <Wifi size={14} strokeWidth={2} color={ink} />, <Search size={12} strokeWidth={1.8} color={ink} />, <Control s={14} />].map((ic, i) => (
            <span key={i} className="w-[31px] flex justify-center">{ic}</span>
          ))}
          <span className="ml-[6px] mr-[3px] whitespace-nowrap text-[12px]">Wed 13. Nov&nbsp; 12.05</span>
        </div>
      </div>
      <div className="flex-1 min-h-0 flex">
        <Sidebar />
        <MainCal />
        <RightPanel />
      </div>
    </div>
  );
}

export default function App() {
  return (
    <div className="relative w-[2690px] h-[1684px] bg-black overflow-hidden font-['Liberation_Sans',Arial,sans-serif]">
      <ExcelWindow />
      <BusyCal />
      <SyncWindow />
    </div>
  );
}
